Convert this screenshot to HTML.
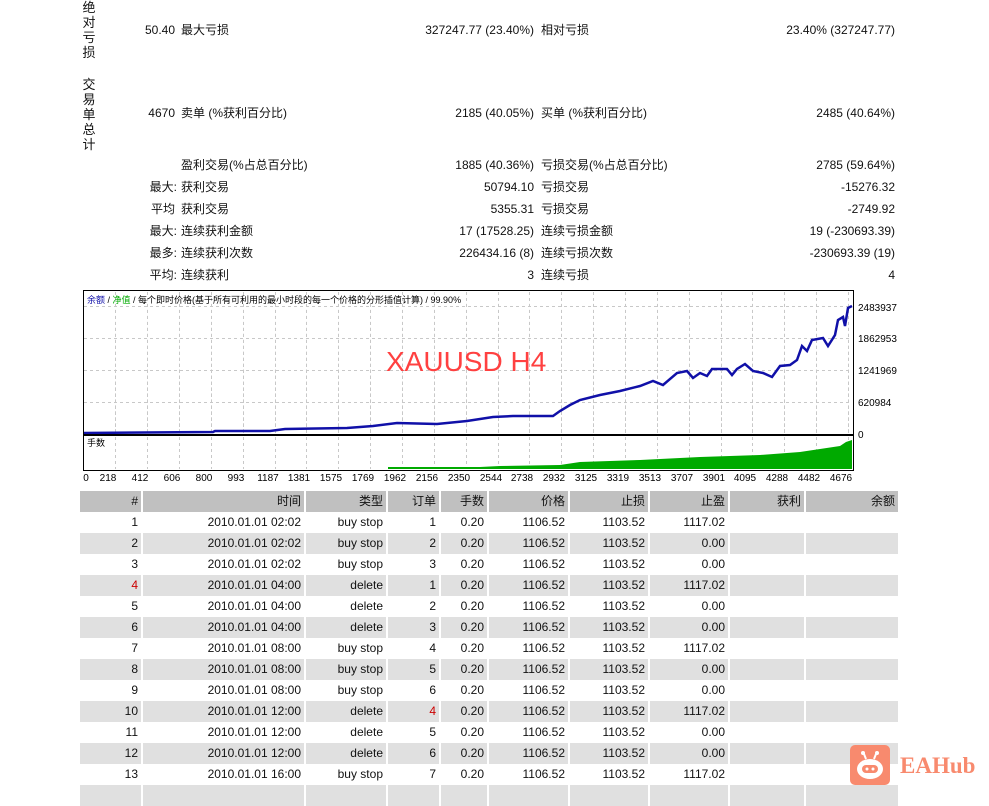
<!DOCTYPE html>
<html><head><meta charset="utf-8"><style>
*{margin:0;padding:0;box-sizing:border-box}
body{width:989px;height:791px;overflow:hidden;background:#fff;position:relative;font-family:"Liberation Sans","Noto Sans CJK SC",sans-serif;font-size:12px;color:#111}
.a{position:absolute;white-space:nowrap;line-height:14px}
.r{text-align:right}
.vt{position:absolute;left:81px;width:16px;font-size:13px;line-height:15px;text-align:center}
table{position:absolute;left:80px;top:491px;border-collapse:collapse;table-layout:fixed}
td{height:21px;text-align:right;padding:0 3px 0 0;border-left:2px solid #fff;white-space:nowrap;line-height:21px;font-size:12px}
td:first-child{border-left:0}
tr.h td{background:#c0c0c0;height:21px}
tr.g td{background:#e0e0e0}
.red{color:#c00}
</style></head><body>
<div class="vt" style="top:0">绝<br>对<br>亏<br>损</div>
<div class="vt" style="top:77px">交<br>易<br>单<br>总<br>计</div>

<div class="a r" style="right:814px;top:23px">50.40</div>
<div class="a" style="left:181px;top:23px">最大亏损</div>
<div class="a r" style="right:455px;top:23px">327247.77 (23.40%)</div>
<div class="a" style="left:541px;top:23px">相对亏损</div>
<div class="a r" style="right:94px;top:23px">23.40% (327247.77)</div>

<div class="a r" style="right:814px;top:106px">4670</div>
<div class="a" style="left:181px;top:106px">卖单 (%获利百分比)</div>
<div class="a r" style="right:455px;top:106px">2185 (40.05%)</div>
<div class="a" style="left:541px;top:106px">买单 (%获利百分比)</div>
<div class="a r" style="right:94px;top:106px">2485 (40.64%)</div>

<div class="a" style="left:181px;top:158px">盈利交易(%占总百分比)</div>
<div class="a r" style="right:455px;top:158px">1885 (40.36%)</div>
<div class="a" style="left:541px;top:158px">亏损交易(%占总百分比)</div>
<div class="a r" style="right:94px;top:158px">2785 (59.64%)</div>

<div class="a r" style="right:812px;top:180px">最大:</div>
<div class="a" style="left:181px;top:180px">获利交易</div>
<div class="a r" style="right:455px;top:180px">50794.10</div>
<div class="a" style="left:541px;top:180px">亏损交易</div>
<div class="a r" style="right:94px;top:180px">-15276.32</div>

<div class="a r" style="right:814px;top:202px">平均</div>
<div class="a" style="left:181px;top:202px">获利交易</div>
<div class="a r" style="right:455px;top:202px">5355.31</div>
<div class="a" style="left:541px;top:202px">亏损交易</div>
<div class="a r" style="right:94px;top:202px">-2749.92</div>

<div class="a r" style="right:812px;top:224px">最大:</div>
<div class="a" style="left:181px;top:224px">连续获利金额</div>
<div class="a r" style="right:455px;top:224px">17 (17528.25)</div>
<div class="a" style="left:541px;top:224px">连续亏损金额</div>
<div class="a r" style="right:94px;top:224px">19 (-230693.39)</div>

<div class="a r" style="right:812px;top:246px">最多:</div>
<div class="a" style="left:181px;top:246px">连续获利次数</div>
<div class="a r" style="right:455px;top:246px">226434.16 (8)</div>
<div class="a" style="left:541px;top:246px">连续亏损次数</div>
<div class="a r" style="right:94px;top:246px">-230693.39 (19)</div>

<div class="a r" style="right:812px;top:268px">平均:</div>
<div class="a" style="left:181px;top:268px">连续获利</div>
<div class="a r" style="right:455px;top:268px">3</div>
<div class="a" style="left:541px;top:268px">连续亏损</div>
<div class="a r" style="right:94px;top:268px">4</div>

<svg style="position:absolute;left:0;top:0" width="989" height="491">
<defs>
<g id="vg">
<line x1="115.5" y1="0" x2="115.5" y2="1"/><line x1="147.5" y1="0" x2="147.5" y2="1"/><line x1="179.5" y1="0" x2="179.5" y2="1"/><line x1="211.5" y1="0" x2="211.5" y2="1"/><line x1="243.5" y1="0" x2="243.5" y2="1"/><line x1="275.5" y1="0" x2="275.5" y2="1"/><line x1="306.5" y1="0" x2="306.5" y2="1"/><line x1="338.5" y1="0" x2="338.5" y2="1"/><line x1="370.5" y1="0" x2="370.5" y2="1"/><line x1="402.5" y1="0" x2="402.5" y2="1"/><line x1="434.5" y1="0" x2="434.5" y2="1"/><line x1="466.5" y1="0" x2="466.5" y2="1"/><line x1="498.5" y1="0" x2="498.5" y2="1"/><line x1="529.5" y1="0" x2="529.5" y2="1"/><line x1="561.5" y1="0" x2="561.5" y2="1"/><line x1="593.5" y1="0" x2="593.5" y2="1"/><line x1="625.5" y1="0" x2="625.5" y2="1"/><line x1="657.5" y1="0" x2="657.5" y2="1"/><line x1="689.5" y1="0" x2="689.5" y2="1"/><line x1="721.5" y1="0" x2="721.5" y2="1"/><line x1="752.5" y1="0" x2="752.5" y2="1"/><line x1="784.5" y1="0" x2="784.5" y2="1"/><line x1="816.5" y1="0" x2="816.5" y2="1"/><line x1="848.5" y1="0" x2="848.5" y2="1"/>
</g>
</defs>
<g stroke="#c8c8c8" stroke-width="1">
<g stroke-dasharray="3,3">
<line x1="84" y1="306.5" x2="852" y2="306.5"/><line x1="84" y1="338.5" x2="852" y2="338.5"/><line x1="84" y1="370.5" x2="852" y2="370.5"/><line x1="84" y1="402.5" x2="852" y2="402.5"/>
</g>
<use href="#vg" transform="translate(0,292) scale(1,142)" stroke-dasharray="0.021,0.021" vector-effect="non-scaling-stroke"/>
</g>
<g stroke="#c8c8c8" stroke-dasharray="3,3">
<line x1="115.5" y1="292" x2="115.5" y2="434"/><line x1="147.5" y1="292" x2="147.5" y2="434"/><line x1="179.5" y1="292" x2="179.5" y2="434"/><line x1="211.5" y1="292" x2="211.5" y2="434"/><line x1="243.5" y1="292" x2="243.5" y2="434"/><line x1="275.5" y1="292" x2="275.5" y2="434"/><line x1="306.5" y1="292" x2="306.5" y2="434"/><line x1="338.5" y1="292" x2="338.5" y2="434"/><line x1="370.5" y1="292" x2="370.5" y2="434"/><line x1="402.5" y1="292" x2="402.5" y2="434"/><line x1="434.5" y1="292" x2="434.5" y2="434"/><line x1="466.5" y1="292" x2="466.5" y2="434"/><line x1="498.5" y1="292" x2="498.5" y2="434"/><line x1="529.5" y1="292" x2="529.5" y2="434"/><line x1="561.5" y1="292" x2="561.5" y2="434"/><line x1="593.5" y1="292" x2="593.5" y2="434"/><line x1="625.5" y1="292" x2="625.5" y2="434"/><line x1="657.5" y1="292" x2="657.5" y2="434"/><line x1="689.5" y1="292" x2="689.5" y2="434"/><line x1="721.5" y1="292" x2="721.5" y2="434"/><line x1="752.5" y1="292" x2="752.5" y2="434"/><line x1="784.5" y1="292" x2="784.5" y2="434"/><line x1="816.5" y1="292" x2="816.5" y2="434"/><line x1="848.5" y1="292" x2="848.5" y2="434"/>
<line x1="115.5" y1="437" x2="115.5" y2="469"/><line x1="147.5" y1="437" x2="147.5" y2="469"/><line x1="179.5" y1="437" x2="179.5" y2="469"/><line x1="211.5" y1="437" x2="211.5" y2="469"/><line x1="243.5" y1="437" x2="243.5" y2="469"/><line x1="275.5" y1="437" x2="275.5" y2="469"/><line x1="306.5" y1="437" x2="306.5" y2="469"/><line x1="338.5" y1="437" x2="338.5" y2="469"/><line x1="370.5" y1="437" x2="370.5" y2="469"/><line x1="402.5" y1="437" x2="402.5" y2="469"/><line x1="434.5" y1="437" x2="434.5" y2="469"/><line x1="466.5" y1="437" x2="466.5" y2="469"/><line x1="498.5" y1="437" x2="498.5" y2="469"/><line x1="529.5" y1="437" x2="529.5" y2="469"/><line x1="561.5" y1="437" x2="561.5" y2="469"/><line x1="593.5" y1="437" x2="593.5" y2="469"/><line x1="625.5" y1="437" x2="625.5" y2="469"/><line x1="657.5" y1="437" x2="657.5" y2="469"/><line x1="689.5" y1="437" x2="689.5" y2="469"/><line x1="721.5" y1="437" x2="721.5" y2="469"/><line x1="752.5" y1="437" x2="752.5" y2="469"/><line x1="784.5" y1="437" x2="784.5" y2="469"/><line x1="816.5" y1="437" x2="816.5" y2="469"/><line x1="848.5" y1="437" x2="848.5" y2="469"/>
</g>
<polygon fill="#00aa00" points="388,469 388,467 480,467 500,466 560,465 580,462 640,460 700,457 760,455 800,452 840,446 846,442 852,440 852,469"/>
<polyline fill="none" stroke="#1010a8" stroke-width="2.5" points="84,433 213,432 215,431 270,431 285,429 347,428 373,426 397,423 437,424 467,421 493,417 513,416 553,416 560,411 570,405 580,400 600,395 620,391 640,386 653,381 663,385 677,373 687,371 693,378 700,373 707,376 712,369 727,369 732,375 737,369 745,364 753,371 763,373 772,377 780,366 790,365 797,360 802,346 807,351 812,340 823,338 828,346 835,335 838,320 843,317 845,326 848,308 852,306"/>
<rect x="83.5" y="290.5" width="770" height="180" fill="none" stroke="#000"/>
<line x1="83" y1="435" x2="854" y2="435" stroke="#000" stroke-width="2"/>
<g font-family="Liberation Sans,Noto Sans CJK SC,sans-serif" font-size="10" fill="#000">
<text x="858" y="311">2483937</text><text x="858" y="342">1862953</text><text x="858" y="374">1241969</text><text x="858" y="406">620984</text><text x="858" y="438">0</text>
<text x="87" y="303" font-size="9"><tspan fill="#1010a8">余额</tspan> / <tspan fill="#00aa00">净值</tspan> / 每个即时价格(基于所有可利用的最小时段的每一个价格的分形插值计算) / 99.90%</text>
<text x="87" y="446" font-size="9">手数</text>
<g text-anchor="middle"><text x="86" y="481">0</text><text x="108" y="481">218</text><text x="140" y="481">412</text><text x="172" y="481">606</text><text x="204" y="481">800</text><text x="236" y="481">993</text><text x="268" y="481">1187</text><text x="299" y="481">1381</text><text x="331" y="481">1575</text><text x="363" y="481">1769</text><text x="395" y="481">1962</text><text x="427" y="481">2156</text><text x="459" y="481">2350</text><text x="491" y="481">2544</text><text x="522" y="481">2738</text><text x="554" y="481">2932</text><text x="586" y="481">3125</text><text x="618" y="481">3319</text><text x="650" y="481">3513</text><text x="682" y="481">3707</text><text x="714" y="481">3901</text><text x="745" y="481">4095</text><text x="777" y="481">4288</text><text x="809" y="481">4482</text><text x="841" y="481">4676</text></g>
</g>
<text x="386" y="371" font-family="Liberation Sans,sans-serif" font-size="28" fill="#ff4040">XAUUSD H4</text>
</svg>

<table>
<colgroup><col style="width:62px"><col style="width:163px"><col style="width:82px"><col style="width:53px"><col style="width:48px"><col style="width:81px"><col style="width:80px"><col style="width:80px"><col style="width:76px"><col style="width:93px"></colgroup>
<tr class="h"><td>#</td><td>时间</td><td>类型</td><td>订单</td><td>手数</td><td>价格</td><td>止损</td><td>止盈</td><td>获利</td><td>余额</td></tr>
<tr><td>1</td><td>2010.01.01 02:02</td><td>buy stop</td><td>1</td><td>0.20</td><td>1106.52</td><td>1103.52</td><td>1117.02</td><td></td><td></td></tr>
<tr class="g"><td>2</td><td>2010.01.01 02:02</td><td>buy stop</td><td>2</td><td>0.20</td><td>1106.52</td><td>1103.52</td><td>0.00</td><td></td><td></td></tr>
<tr><td>3</td><td>2010.01.01 02:02</td><td>buy stop</td><td>3</td><td>0.20</td><td>1106.52</td><td>1103.52</td><td>0.00</td><td></td><td></td></tr>
<tr class="g"><td class="red">4</td><td>2010.01.01 04:00</td><td>delete</td><td>1</td><td>0.20</td><td>1106.52</td><td>1103.52</td><td>1117.02</td><td></td><td></td></tr>
<tr><td>5</td><td>2010.01.01 04:00</td><td>delete</td><td>2</td><td>0.20</td><td>1106.52</td><td>1103.52</td><td>0.00</td><td></td><td></td></tr>
<tr class="g"><td>6</td><td>2010.01.01 04:00</td><td>delete</td><td>3</td><td>0.20</td><td>1106.52</td><td>1103.52</td><td>0.00</td><td></td><td></td></tr>
<tr><td>7</td><td>2010.01.01 08:00</td><td>buy stop</td><td>4</td><td>0.20</td><td>1106.52</td><td>1103.52</td><td>1117.02</td><td></td><td></td></tr>
<tr class="g"><td>8</td><td>2010.01.01 08:00</td><td>buy stop</td><td>5</td><td>0.20</td><td>1106.52</td><td>1103.52</td><td>0.00</td><td></td><td></td></tr>
<tr><td>9</td><td>2010.01.01 08:00</td><td>buy stop</td><td>6</td><td>0.20</td><td>1106.52</td><td>1103.52</td><td>0.00</td><td></td><td></td></tr>
<tr class="g"><td>10</td><td>2010.01.01 12:00</td><td>delete</td><td class="red">4</td><td>0.20</td><td>1106.52</td><td>1103.52</td><td>1117.02</td><td></td><td></td></tr>
<tr><td>11</td><td>2010.01.01 12:00</td><td>delete</td><td>5</td><td>0.20</td><td>1106.52</td><td>1103.52</td><td>0.00</td><td></td><td></td></tr>
<tr class="g"><td>12</td><td>2010.01.01 12:00</td><td>delete</td><td>6</td><td>0.20</td><td>1106.52</td><td>1103.52</td><td>0.00</td><td></td><td></td></tr>
<tr><td>13</td><td>2010.01.01 16:00</td><td>buy stop</td><td>7</td><td>0.20</td><td>1106.52</td><td>1103.52</td><td>1117.02</td><td></td><td></td></tr>
<tr class="g"><td></td><td></td><td></td><td></td><td></td><td></td><td></td><td></td><td></td><td></td></tr>
</table>

<svg style="position:absolute;left:850px;top:745px" width="40" height="40" viewBox="0 0 40 40">
<rect width="40" height="40" rx="5" fill="#f88a6e"/>
<circle cx="13" cy="8" r="2" fill="#fff"/><circle cx="27" cy="8" r="2" fill="#fff"/>
<line x1="14" y1="9" x2="16" y2="14" stroke="#fff" stroke-width="2"/><line x1="26" y1="9" x2="24" y2="14" stroke="#fff" stroke-width="2"/>
<ellipse cx="20" cy="24" rx="13" ry="10" fill="#fff"/>
<rect x="12" y="20" width="16" height="8" rx="4" fill="#f88a6e"/>
<circle cx="17" cy="24" r="1.5" fill="#fff"/><circle cx="23" cy="24" r="1.5" fill="#fff"/>
</svg>
<div class="a" style="left:900px;top:752px;font-family:'Liberation Serif','DejaVu Serif',serif;font-weight:bold;font-size:23px;line-height:28px;color:#f88a6e">EAHub</div>
</body></html>
